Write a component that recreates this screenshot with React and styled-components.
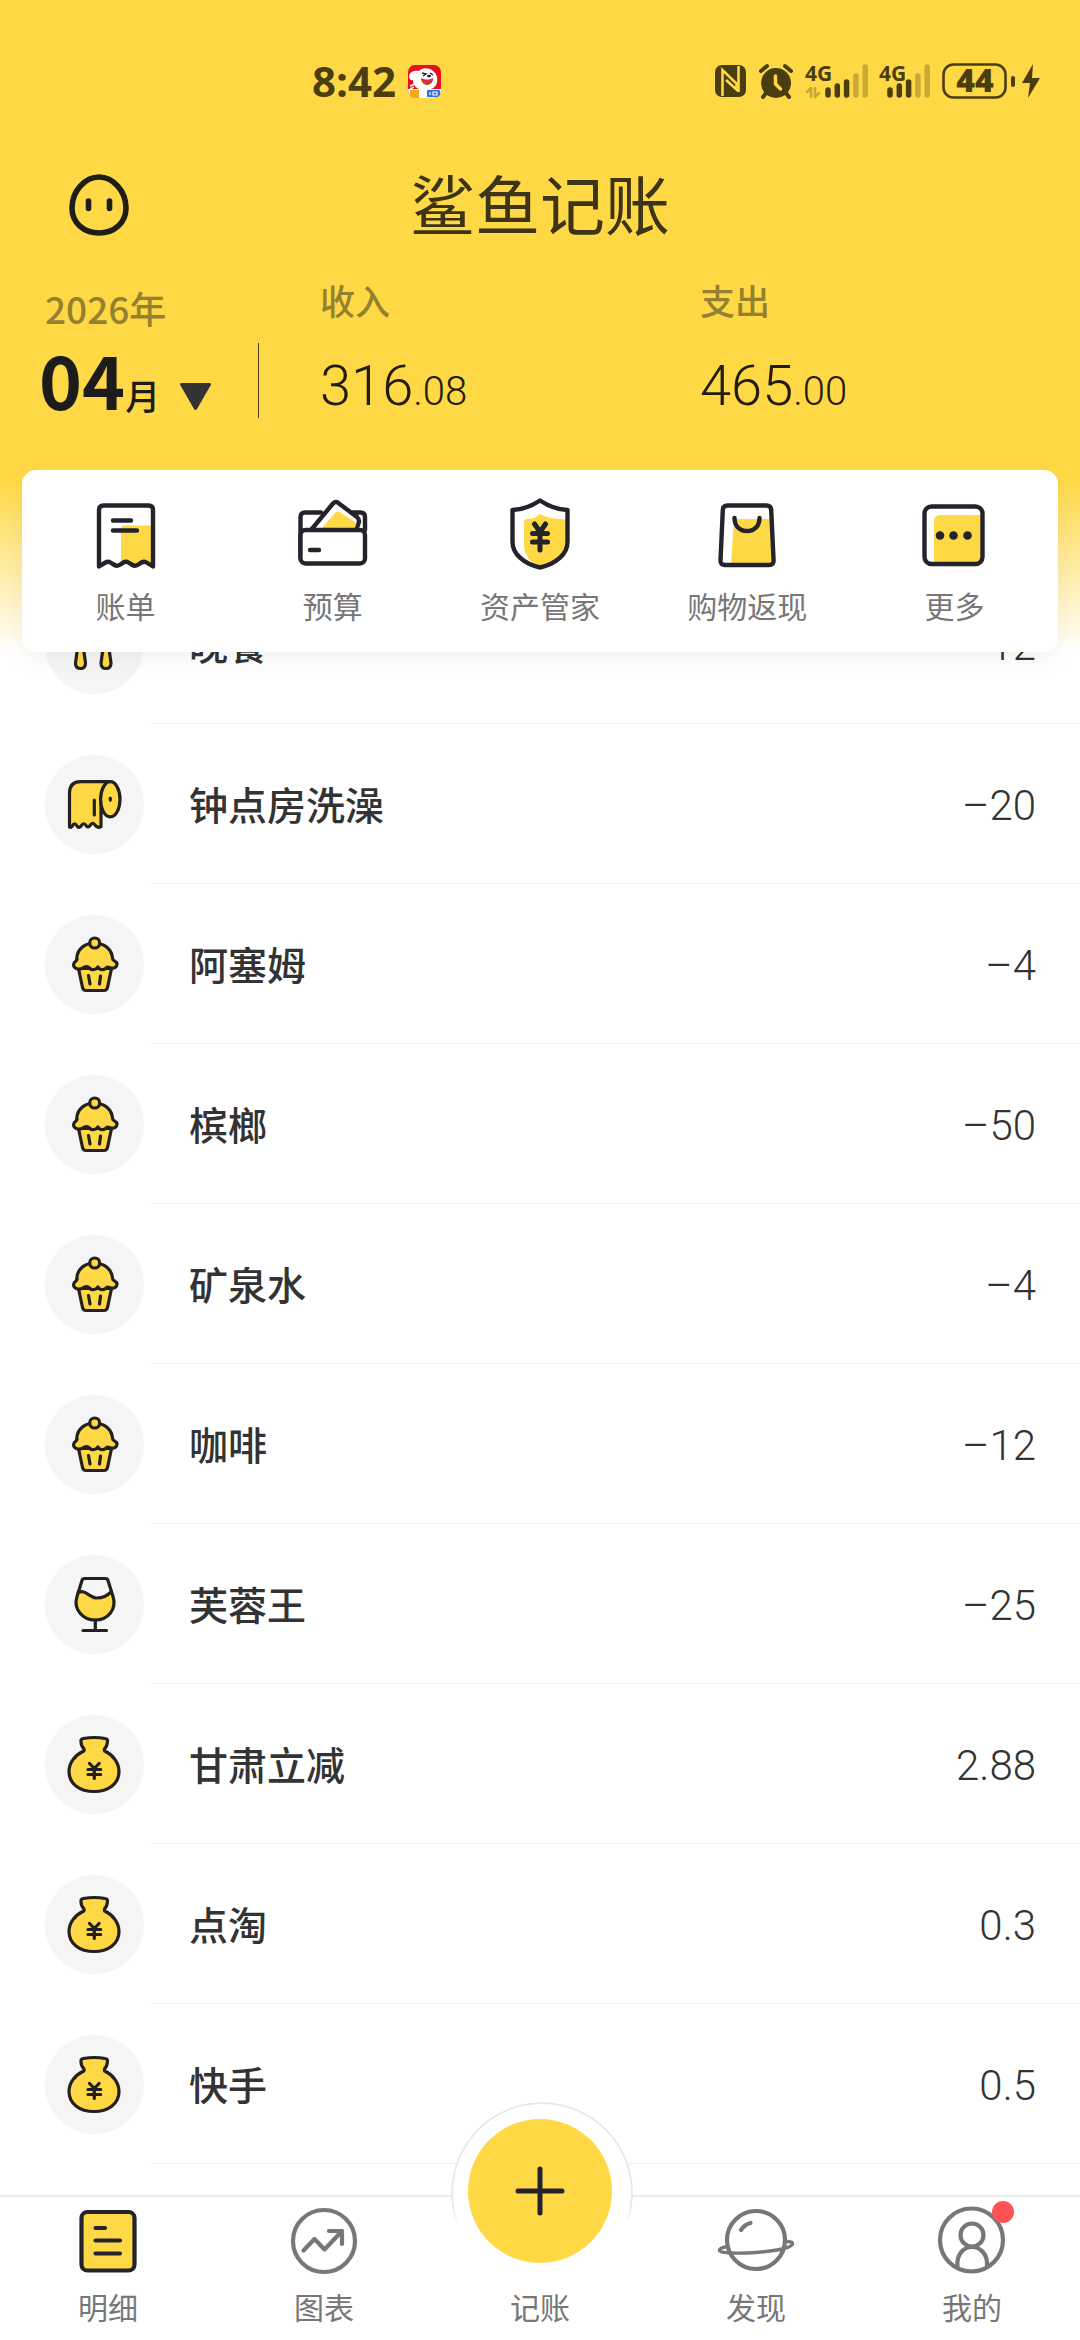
import React from "react";
import styled, { createGlobalStyle } from "styled-components";

const YELLOW = "#ffd945";
const INK = "#24222b";
const GREY = "#777";

const GlobalStyle = createGlobalStyle`
  * {
    box-sizing: border-box;
  }

  body {
    margin: 0;
    background: #fff;
    color: #333;
    font-family: "Noto Sans CJK SC", sans-serif;
  }

  button {
    border: none;
    padding: 0;
    background: none;
    font: inherit;
    color: inherit;
  }

  a {
    color: inherit;
    text-decoration: none;
  }

  svg {
    display: block;
    overflow: visible;
  }
`;

const Page = styled.div`
  display: flex;
  flex-direction: column;
  min-height: 100vh;
`;

const Header = styled.header`
  position: sticky;
  top: 0;
  z-index: 1;
  background: linear-gradient(${YELLOW} calc(100% - 172px), #fff 100%);
`;

const StatusBar = styled.div`
  display: flex;
  align-items: center;
  padding: 57px 40px 0 312px;
  line-height: 48px;
  color: #4a3d10;
`;

const Clock = styled.span`
  margin-right: 12px;
  font-family: "Open Sans", sans-serif;
  font-size: 42px;
  font-weight: 700;
`;

const StatusIcons = styled.div`
  display: flex;
  gap: 12px;
  margin-left: auto;
`;

const TitleBar = styled.div`
  display: grid;
  grid-template-columns: 1fr auto 1fr;
  align-items: start;
  height: 64px;
  margin-top: 69px;
  padding: 0 69px;
`;

const FaceButton = styled.button`
  justify-self: start;
`;

const Logo = styled.h1`
  margin: 0;
  font-size: 65px;
  font-weight: 400;
  line-height: 56px;
  color: #3d3316;
`;

const Summary = styled.div`
  display: grid;
  grid-template-columns: 320px 1fr 1fr;
  margin-top: 44px;
  color: #221c0c;
`;

const DateButton = styled.button`
  display: flex;
  align-items: flex-end;
  justify-content: space-between;
  padding: 6px 61px 0 39px;
  text-align: left;
`;

const Label = styled.div`
  font-size: 35px;
  font-weight: 500;
  line-height: 36px;
  color: #94802f;
`;

const YearLabel = styled(Label)`
  padding-left: 6px;
  font-size: 37px;
`;

const Month = styled.div`
  display: flex;
  align-items: baseline;
  margin-top: 12px;
  font-size: 35px;
  font-weight: 500;
  line-height: 36px;
  color: #1c1c1a;

  b {
    font-size: 73px;
    font-weight: 700;
    line-height: 80px;
  }

  svg {
    margin-left: 20px;
  }
`;

const Divider = styled.span`
  width: 1px;
  height: 75px;
  background: #4a3d10;
`;

const Total = styled.div`
  margin-top: 36px;
  font-family: Roboto, sans-serif;
  font-size: 56px;
  font-weight: 300;
  line-height: 64px;

  small {
    font-size: 40px;
    line-height: 40px;
  }
`;

const Shortcuts = styled.nav`
  display: flex;
  margin: 52px 22px 0;
  padding: 25px 0 32px;
  border-radius: 14px;
  background: #fff;
  box-shadow: 0 8px 24px rgba(0, 0, 0, 0.05);
`;

const Shortcut = styled.a`
  display: flex;
  flex: 1;
  flex-direction: column;
  align-items: center;
  gap: 15px;
  font-size: 30px;
  line-height: 30px;
  color: ${GREY};
`;

// the first record is half hidden under the header
const Records = styled.ul`
  flex: 1;
  margin: -88px 0 0;
  padding: 0;
  list-style: none;
`;

const Record = styled.li`
  display: flex;
  align-items: center;
  padding-left: 45px;
`;

const Category = styled.div`
  width: 99px;
  height: 99px;
  border-radius: 50%;
  background: #f5f5f5;
`;

const RecordBody = styled.div`
  display: flex;
  flex: 1;
  align-items: baseline;
  justify-content: space-between;
  margin-left: 6px;
  padding: 0 44px 0 39px;
  border-bottom: 1px solid #f1f1f1;
`;

const RecordName = styled.span`
  font-size: 39px;
  font-weight: 500;
  line-height: 159px;
`;

const Amount = styled.span`
  font-family: Roboto, sans-serif;
  font-size: 42px;
  font-weight: 300;
  line-height: 48px;
`;

const TabBar = styled.nav`
  position: sticky;
  bottom: 0;
  z-index: 1;
  display: flex;
  height: 145px;
  border-top: 2px solid #ececec;
  background: #fff;
`;

const Tab = styled.a`
  display: flex;
  flex: 1;
  flex-direction: column;
  align-items: center;
  justify-content: flex-end;
  gap: 11px;
  padding-bottom: 19px;
  font-size: 30px;
  line-height: 30px;
  color: ${GREY};
`;

const TabIcon = styled.span`
  position: relative;
`;

const Badge = styled.i`
  position: absolute;
  top: -1px;
  right: -3px;
  width: 22px;
  height: 22px;
  border-radius: 50%;
  background: #ff5257;
`;

const AddTab = styled(Tab).attrs({ as: "button" })`
  position: relative;
  padding-bottom: 19px;
  font-size: 30px;
  line-height: 30px;
  color: ${GREY};

  &::before {
    content: "";
    position: absolute;
    top: -95px;
    left: calc(50% - 89px);
    width: 178px;
    height: 178px;
    border: 2px solid #e8e8e8;
    border-radius: 50%;
    background: #fff;
    mask-image: linear-gradient(#000 106px, transparent 122px);
  }
`;

const AddCircle = styled.span`
  position: absolute;
  top: -78px;
  left: calc(50% - 72px);
  display: grid;
  place-items: center;
  width: 144px;
  height: 144px;
  border-radius: 50%;
  background: ${YELLOW};
`;

const Stroked = styled.svg.attrs({ fill: "none", strokeLinecap: "round", strokeLinejoin: "round" })``;

/* ---------- status bar ---------- */

const AppBadge = () => (
  <svg width="33" height="33" viewBox="0 0 33 33">
    <clipPath id="app-badge">
      <rect width="33" height="33" rx="7" />
    </clipPath>
    <g clipPath="url(#app-badge)">
      <rect width="33" height="33" fill="#e8111b" />
      <path d="M0 24h33v9H0z" fill="#f4efe4" />
      <path d="M1 11c1-5 6-6 10-5C15 1 27 3 29 12c1 6-1 10-6 12l-6 9H9l2-9C6 22 5 18 5 15c-2 1-4-1-4-4z" fill="#fff" />
      <path d="M13 13c5 2 8 2 12 0 0 5-3 7-6 7s-6-3-6-7z" fill="#d3343c" />
      <path d="M14 8l4 1-3 2M22 8l3 2" fill="none" stroke="#222" strokeWidth="1.4" />
      <ellipse cx="21" cy="11" rx="2" ry="1.3" fill="#222" />
      <path d="M2 21l5-2M2 24l4-2" stroke="#fff" strokeWidth="1.4" />
      <rect x="2" y="25" width="9" height="8" fill="#f8a715" />
      <rect x="19" y="25" width="13" height="7" rx="1" fill="#2f6fe0" />
      <path d="M22 27v3M25 27h4v3h-4z" fill="none" stroke="#fff" strokeWidth="1.2" />
    </g>
  </svg>
);

const Nfc = () => (
  <svg width="31" height="36" viewBox="0 0 31 36">
    <rect y="2" width="31" height="32" rx="7" fill="#4a3d10" />
    <path d="M7.500 33V7l14 13.500v6L11 17M23.500 3v26" fill="none" stroke={YELLOW} strokeWidth="2.600" />
  </svg>
);

const Alarm = () => (
  <Stroked width="36" height="36" viewBox="0 0 36 36" stroke="#4a3d10" strokeWidth="4">
    <circle cx="18" cy="20" r="13" fill="#4a3d10" />
    <path d="M3 8l6-5M33 8l-6-5M8 30l-3 4M28 30l3 4" />
    <path d="M17.500 13v8l5 5" stroke={YELLOW} strokeWidth="3.500" />
  </Stroked>
);

const BAR_TOPS = [27, 23, 19, 13, 4];

const Signal = ({ width, start, arrows }) => (
  <Stroked width={width} height="36" viewBox={`0 0 ${width} 36`} stroke="#4a3d10" strokeWidth="5.500">
    {BAR_TOPS.map((top, i) => (
      <path key={top} d={`M${start + i * 9.3} ${top}V32`} opacity={i > 2 ? 0.3 : 1} />
    ))}
    {arrows && <path d="M1 29l4-4v9M9 25v9l4-4" strokeWidth="2.500" opacity="0.3" />}
    <text x="-1" y="18" fill="#4a3d10" stroke="none" fontFamily="Open Sans, sans-serif" fontSize="21" fontWeight="700">
      4G
    </text>
  </Stroked>
);

const Battery = () => (
  <svg width="98" height="36" viewBox="0 0 98 36">
    <rect x="1.500" y="1.500" width="62" height="33" rx="10" fill="none" stroke="#4a3d10" strokeWidth="2.600" />
    <rect x="69" y="13" width="4" height="11" rx="2" fill="#4a3d10" />
    <path d="M91 1L80 20h8l-2 15 12-20h-8z" fill="#4a3d10" />
    <text x="33" y="29" textAnchor="middle" fill="#4a3d10" fontFamily="Open Sans, sans-serif" fontSize="32" fontWeight="800">
      44
    </text>
  </svg>
);

const Face = () => (
  <Stroked width="60" height="62" viewBox="0 0 60 62" stroke="#1f1d18" strokeWidth="5.600">
    <path d="M30 3C16 3 3 17 3 34c0 15 12 25 27 25s27-10 27-25C57 17 44 3 30 3z" />
    <path d="M19.500 27v7.500M40.500 27v7.500" />
  </Stroked>
);

/* ---------- shortcuts ---------- */

const ShortcutIcon = ({ children }) => (
  <Stroked width="80" height="80" viewBox="0 0 80 80" stroke={INK} strokeWidth="4.400">
    {children}
  </Stroked>
);

const BillIcon = () => (
  <ShortcutIcon>
    <path d="M35 34q0-3.500 3.500-3.500H67V70l-9-3-9 4-9-4-5 2z" fill={YELLOW} stroke="none" />
    <path d="M13 71.500V15q0-4.500 4.500-4.500h45Q67 10.500 67 15v56.500l-6.500-4q-2.500-1.500-5 0l-4 2.500q-2.500 1.500-5 0l-4-2.500q-2.500-1.500-5 0l-4 2.500q-2.500 1.500-5 0l-4-2.500q-2.500-1.500-5 0z" />
    <path d="M27 25.500h18M27 35.500h24" />
  </ShortcutIcon>
);

const BudgetIcon = () => (
  <ShortcutIcon>
    <path d="M7.500 63V22q0-4.500 4.500-4.500h16M59 17.500h8.500Q72 17.500 72 22v13" />
    <path d="M18 35L40 8.500q3-3 6 0L64 22q3 3 1.500 6.500L63 35" fill="#fff" />
    <path d="M28 34l14-16q3-3 6 0l14 9q2 3-1 7z" fill={YELLOW} stroke="none" />
    <rect x="7.500" y="35" width="64.500" height="33.500" rx="5" fill="#fff" />
    <path d="M17 55h9" />
  </ShortcutIcon>
);

const AssetsIcon = () => (
  <ShortcutIcon>
    <path d="M24 27q0-3 3-3 8 0 13-5 8 5 27 5.500V46C67 60 54 69 40 72 31 69 24 60 24 50z" fill={YELLOW} stroke="none" />
    <path d="M40 5.500C32 11 23 14.500 12.500 15v32C12.500 59 24 69 40 72.500 56 69 67.500 59 67.500 47V15C57 14.500 48 11 40 5.500z" />
    <path d="M34.500 29l5.500 8 5.500-8M40 37v18M32.500 38.500h15M32.500 47h15" strokeWidth="5" />
  </ShortcutIcon>
);

const CashbackIcon = () => (
  <ShortcutIcon>
    <path d="M27 24h37.500L66 70H24z" fill={YELLOW} stroke="none" />
    <path d="M20.500 10.500h39q4.500 0 4.700 4.500l2.400 50.500q.2 4.500-4.500 4.500H18q-4.700 0-4.500-4.500L15.800 15q.2-4.500 4.700-4.500z" />
    <path d="M27.500 23c0 8 5 13 12.500 13s12.500-5 12.500-13" />
  </ShortcutIcon>
);

const MoreIcon = () => (
  <ShortcutIcon>
    <path d="M20 26q0-6 6-6h42v49H20z" fill={YELLOW} stroke="none" />
    <rect x="10.500" y="11.500" width="58" height="57.500" rx="7" />
    <g fill={INK} stroke="none">
      <circle cx="26" cy="40.500" r="4.300" />
      <circle cx="39.500" cy="40.500" r="4.300" />
      <circle cx="53.500" cy="40.500" r="4.300" />
    </g>
  </ShortcutIcon>
);

/* ---------- record categories ---------- */

const CategoryIcon = ({ children }) => (
  <Stroked width="99" height="99" viewBox="0 0 99 99" stroke="#24201d" strokeWidth="3.200">
    {children}
  </Stroked>
);

const MealIcon = () => (
  <CategoryIcon>
    <path d="M33 50h5l2.500 18q0 5.500-5 5.500T30.500 68zM58.500 50h5L66 68q0 5.500-5 5.500T56 68z" fill={YELLOW} />
    <path d="M28 24v14q0 8 7.500 10 7.500-2 7.500-10V24M35.500 24v24" />
    <ellipse cx="61" cy="36" rx="8" ry="12" fill={YELLOW} />
  </CategoryIcon>
);

const DailyIcon = () => (
  <CategoryIcon>
    <path
      d="M65 26.700H36q-11.500 0-11.500 11.500V72q1 .8 2.500-.5 2.500-5 5-.5 2 3 4.500-.5 2.500-3.500 4.500 0 2 3 4.500-.5 2.500-3.500 4.500 0 2.500 3.500 6 1.500V44z"
      fill={YELLOW}
    />
    <ellipse cx="65.300" cy="44.300" rx="9.700" ry="17.600" fill={YELLOW} />
    <ellipse cx="65.300" cy="44.300" rx="1" ry="2" fill="#24201d" strokeWidth="1.500" />
    <path d="M49.300 45v15" />
  </CategoryIcon>
);

const SnackIcon = () => (
  <CategoryIcon>
    <path d="M33.500 53.500l4 19q.7 3 3.500 3h18q2.800 0 3.500-3l4-19z" fill={YELLOW} />
    <path
      d="M31.700 44C32 34 40 28 49.500 28S67 34 67.700 44c0 2 4.300 2 4.300 5s-3 4.500-5.500 4c-2 0-3.500-1.500-5-.5-2.500 3-6.500 3-8.500-.5-2 3-6.500 4-9 .5-2.500-1.500-5-.5-6.500.5-3 2-9 1-9-3.500 0-3 3.300-3 3.700-5.500z"
      fill={YELLOW}
    />
    <circle cx="49.700" cy="28" r="5" fill={YELLOW} />
    <path d="M43.500 60.500l1.500 8.500M55.500 61l-1 8" />
  </CategoryIcon>
);

const DrinkIcon = () => (
  <CategoryIcon>
    <path d="M33.500 38C41 34 44 43 52 43c6 0 10-2 14-6 8 15-1 28-15.700 28S25 53 33.500 38z" fill={YELLOW} stroke="none" />
    <path d="M39.500 23.500h21q2 0 2.500 2l5 16C72 54 63 65 50.300 65S28 54 32 41.500l5-16q.5-2 2.500-2z" />
    <path d="M33 37.500C41 34 44 43 52 43c6 0 10-2 14-6M50.300 65v10M38 75.500h23.500" />
  </CategoryIcon>
);

const MoneyIcon = () => (
  <CategoryIcon>
    <path
      d="M36 26.500q-.5-2.500 2.500-3 11-2 21.500 0 3 .5 2.500 3-.5 5-3 7.500-.7 2 1 2.500C68 40 74 48 74 56.500 74 69 63 76.500 49 76.500S24 69 24 56.500C24 48 30 40 38 36.500q1.700-.5 1-2.500Q36 31 36 26.500z"
      fill={YELLOW}
    />
    <path d="M44.500 48.500l4.800 5 4.800-5M49.300 53.500v10M43 54.500h12.700M43 59.500h12.700" />
  </CategoryIcon>
);

/* ---------- tabs ---------- */

const TabSvg = ({ children, stroke = GREY }) => (
  <Stroked width="78" height="78" viewBox="0 0 78 78" stroke={stroke} strokeWidth="4.200">
    {children}
  </Stroked>
);

const DetailIcon = () => (
  <TabSvg stroke={INK}>
    <rect x="12.500" y="10" width="53" height="58.500" rx="6" fill={YELLOW} />
    <path d="M26.500 26h9.500M26.500 38.500h24.500M26.500 51.500h24.500" />
  </TabSvg>
);

const ChartIcon = () => (
  <TabSvg>
    <circle cx="39" cy="39" r="31" />
    <path d="M18.500 48.500L29.500 37l10 10.500L57 29M44 29h13v13" />
  </TabSvg>
);

const DiscoverIcon = () => (
  <TabSvg>
    <circle cx="39" cy="38" r="29" />
    <path d="M24 28q3.500-5.500 9.500-7" />
    <path d="M10 44.500c-5 1-8 2.500-7.500 4 .5 2 8 3 27 2.500 20-.8 46-4 46-9.500 0-1.500-2-2-6-2" strokeWidth="3.500" />
  </TabSvg>
);

const MineIcon = () => (
  <TabSvg>
    <circle cx="38.500" cy="38" r="31.500" />
    <circle cx="39" cy="33" r="11.500" />
    <path d="M24.500 65C23 52 31 45 39 45s16 7 15 19" />
  </TabSvg>
);

const shortcuts = [
  { name: "账单", Icon: BillIcon },
  { name: "预算", Icon: BudgetIcon },
  { name: "资产管家", Icon: AssetsIcon },
  { name: "购物返现", Icon: CashbackIcon },
  { name: "更多", Icon: MoreIcon },
];

const records = [
  { name: "晚餐", amount: "–12", Icon: MealIcon },
  { name: "钟点房洗澡", amount: "–20", Icon: DailyIcon },
  { name: "阿塞姆", amount: "–4", Icon: SnackIcon },
  { name: "槟榔", amount: "–50", Icon: SnackIcon },
  { name: "矿泉水", amount: "–4", Icon: SnackIcon },
  { name: "咖啡", amount: "–12", Icon: SnackIcon },
  { name: "芙蓉王", amount: "–25", Icon: DrinkIcon },
  { name: "甘肃立减", amount: "2.88", Icon: MoneyIcon },
  { name: "点淘", amount: "0.3", Icon: MoneyIcon },
  { name: "快手", amount: "0.5", Icon: MoneyIcon },
];

function NavTab({ name, Icon, badge }) {
  return (
    <Tab href="#">
      <TabIcon>
        <Icon />
        {badge && <Badge />}
      </TabIcon>
      {name}
    </Tab>
  );
}

function App() {
  return (
    <Page>
      <GlobalStyle />
      <Header>
        <StatusBar>
          <Clock>8:42</Clock>
          <AppBadge />
          <StatusIcons>
            <Nfc />
            <Alarm />
            <Signal width={62} start={22} arrows />
            <Signal width={50} start={10} />
            <Battery />
          </StatusIcons>
        </StatusBar>
        <TitleBar>
          <FaceButton aria-label="客服">
            <Face />
          </FaceButton>
          <Logo>鲨鱼记账</Logo>
        </TitleBar>
        <Summary>
          <DateButton>
            <div>
              <YearLabel>2026年</YearLabel>
              <Month>
                <b>04</b>月
                <svg width="31" height="27" viewBox="0 0 31 27">
                  <path d="M2 0h27q3 0 1.500 2.500L17 26q-1.500 2-3 0L.5 2.500Q-1 0 2 0z" fill="#333" />
                </svg>
              </Month>
            </div>
            <Divider />
          </DateButton>
          <div>
            <Label>收入</Label>
            <Total>
              316<small>.08</small>
            </Total>
          </div>
          <div>
            <Label>支出</Label>
            <Total>
              465<small>.00</small>
            </Total>
          </div>
        </Summary>
        <Shortcuts>
          {shortcuts.map(({ name, Icon }) => (
            <Shortcut key={name} href="#">
              <Icon />
              {name}
            </Shortcut>
          ))}
        </Shortcuts>
      </Header>
      <Records>
        {records.map(({ name, amount, Icon }) => (
          <Record key={name}>
            <Category>
              <Icon />
            </Category>
            <RecordBody>
              <RecordName>{name}</RecordName>
              <Amount>{amount}</Amount>
            </RecordBody>
          </Record>
        ))}
      </Records>
      <TabBar>
        <NavTab name="明细" Icon={DetailIcon} />
        <NavTab name="图表" Icon={ChartIcon} />
        <AddTab>
          <AddCircle>
            <Stroked width="54" height="54" viewBox="0 0 54 54" stroke={INK} strokeWidth="5">
              <path d="M27 5v44M5 27h44" />
            </Stroked>
          </AddCircle>
          记账
        </AddTab>
        <NavTab name="发现" Icon={DiscoverIcon} />
        <NavTab name="我的" Icon={MineIcon} badge />
      </TabBar>
    </Page>
  );
}

export default App;
